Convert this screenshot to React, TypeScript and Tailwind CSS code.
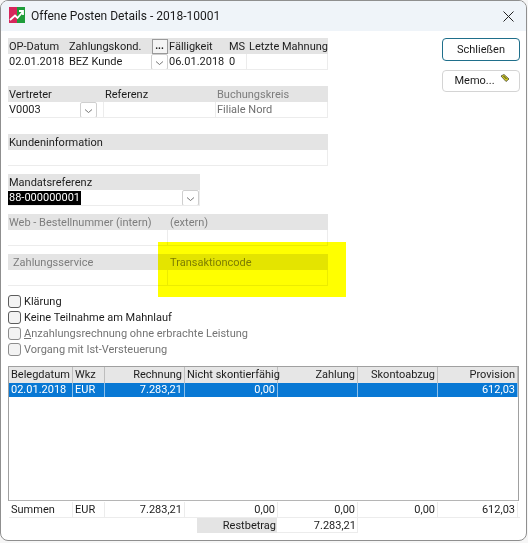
import { ReactNode } from 'react';

const font = 'font-["Roboto","Noto_Sans",sans-serif]';

function Chevron() {
  return (
    <span className="mt-[-1px] flex h-[16px] w-[17px] shrink-0 items-center justify-center rounded-[2px] border border-[#cfcfcf] bg-white">
      <svg width="9" height="6" viewBox="0 0 9 6" className="mt-[3px]">
        <path d="M1 1.5 L4.5 4.5 L8 1.5" fill="none" stroke="#555" strokeWidth="0.8" />
      </svg>
    </span>
  );
}

function Head({ children, muted, className = '' }: { children?: ReactNode; muted?: boolean; className?: string }) {
  return (
    <div className={`flex h-[16px] items-center overflow-hidden whitespace-nowrap bg-[#e4e4e4] px-[1px] pt-[1px] ${muted ? 'text-[#7d7d7d]' : 'text-[#1c1c1c]'} ${className}`}>
      {children}
    </div>
  );
}

function Val({ children, muted, className = '' }: { children?: ReactNode; muted?: boolean; className?: string }) {
  return (
    <div className={`flex h-[16px] items-center overflow-hidden whitespace-nowrap border-b border-r border-[#ececec] px-[1px] pt-[1px] ${muted ? 'text-[#6f6f6f]' : 'text-[#1c1c1c]'} ${className}`}>
      {children}
    </div>
  );
}

function Check({ label, muted, underline }: { label: string; muted?: boolean; underline?: boolean }) {
  return (
    <div className="flex h-[16px] items-center gap-[3px]">
      <span className={`h-[13px] w-[13px] rounded-[3px] border bg-[#f3f3f3] ${muted ? 'border-[#8d8d8d]' : 'border-[#5c5c5c]'}`} />
      <span className={`pt-[1px] ${muted ? 'text-[#747474]' : 'text-[#1c1c1c]'}`}>
        {underline ? (
          <>
            <span className="underline">A</span>
            {label.slice(1)}
          </>
        ) : (
          label
        )}
      </span>
    </div>
  );
}

const cols = 'grid-cols-[64px_32px_80px_93px_80px_80px_80px]';

const headers = ['Belegdatum', 'Wkz', 'Rechnung', 'Nicht skontierfähig', 'Zahlung', 'Skontoabzug', 'Provision'];
const selected = ['02.01.2018', 'EUR', '7.283,21', '0,00', '', '', '612,03'];
const totals = ['Summen', 'EUR', '7.283,21', '0,00', '0,00', '0,00', '612,03'];

export default function App() {
  return (
    <div className={`relative h-[543px] w-[528px] overflow-hidden bg-[#f6f6f6] text-[11px] leading-[14px] ${font}`}>
      <div className="h-[541px] w-[527px] overflow-hidden rounded-[8px] border border-[#8f8f8f] bg-white">
        {/* Titelleiste */}
        <div className="flex h-[30px] items-center bg-[#eff4f9] pl-[8px] pr-[12px]">
          <svg width="16" height="16" viewBox="0 0 16 16" className="mr-[6px] mt-[-2px]">
            <rect width="8" height="16" fill="#d6275c" />
            <rect x="8" width="8" height="16" fill="#1f9d3a" />
            <path d="M1 13 L6 8.5 L8.5 11 L14 4.5 M10 4 H14 V8" fill="none" stroke="#fff" strokeWidth="1.8" />
          </svg>
          <span className="text-[12px] text-[#1a1a1a]">Offene Posten Details - 2018-10001</span>
          <svg width="11" height="11" viewBox="0 0 11 11" className="ml-auto">
            <path d="M0.5 0.5 L10.5 10.5 M10.5 0.5 L0.5 10.5" stroke="#222" strokeWidth="1" />
          </svg>
        </div>

        <div className="px-[7px] pt-[7px]">
          <div className="flex">
            <div className="w-[320px]">
              <div className="grid grid-cols-[60px_83px_17px_59px_20px_81px]">
                <Head>OP-Datum</Head>
                <Head>Zahlungskond.</Head>
                <Head className="justify-center !px-0 !pt-0">
                  <span className="flex h-[15px] w-[16px] items-center justify-center border border-[#9a9a9a] bg-[#f4f4f4] text-[10px] font-bold">...</span>
                </Head>
                <Head>Fälligkeit</Head>
                <Head className="!pl-[2px]">MS</Head>
                <Head className="!pl-[2px]">Letzte Mahnung</Head>
                <Val className="border-r-0">02.01.2018</Val>
                <Val className="border-r-0">BEZ Kunde</Val>
                <Val className="border-r-0 !px-0"><Chevron /></Val>
                <Val className="border-r-0">06.01.2018</Val>
                <Val className="!pl-[2px]">0</Val>
                <Val />
              </div>

              <div className="mt-[16px] grid grid-cols-[96px_112px_112px]">
                <Head>Vertreter</Head>
                <Head>Referenz</Head>
                <Head muted>Buchungskreis</Head>
                <Val className="justify-between !pr-[6px]">V0003<Chevron /></Val>
                <Val />
                <Val muted>Filiale Nord</Val>
              </div>

              <div className="mt-[16px]">
                <Head>Kundeninformation</Head>
                <Val />
              </div>

              <div className="mt-[8px] w-[192px]">
                <Head>Mandatsreferenz</Head>
                <Val className="justify-between !pl-0 !pr-0">
                  <span className="bg-black pl-[1px] pr-[1px] text-white">88-000000001</span>
                  <Chevron />
                </Val>
              </div>

              <div className="mt-[8px] grid grid-cols-[160px_160px]">
                <Head muted>Web - Bestellnummer (intern)</Head>
                <Head muted className="!pl-[2px]">(extern)</Head>
                <Val />
                <Val />
              </div>

              <div className="mt-[8px] grid grid-cols-[160px_160px]">
                <Head muted className="!pl-[5px]">Zahlungsservice</Head>
                <Head muted className="!pl-[2px]">Transaktioncode</Head>
                <Val />
                <Val />
              </div>
            </div>

            <div className="ml-[114px] flex flex-col gap-[9px]">
              <button className="h-[23px] w-[78px] rounded-[4px] border border-[#1f6f8b] bg-white text-[#1a1a1a]">Schließen</button>
              <button className="flex h-[22px] w-[78px] items-center justify-center rounded-[4px] border border-[#d4d4d4] bg-white pl-[2px] text-[#1a1a1a]">
                Memo...
                <svg width="10" height="8" viewBox="0 0 10 8" className="ml-[5px] mt-[-6px]">
                  <path d="M1 2 L4 0.5 L9 5 L6 7.5 Z" fill="#d8d21a" stroke="#444" strokeWidth="0.8" />
                  <path d="M3.5 2 L6.5 5" stroke="#333" strokeWidth="1" />
                </svg>
              </button>
            </div>
          </div>

          <div className="mt-[7px]">
            <Check label="Klärung" />
            <Check label="Keine Teilnahme am Mahnlauf" />
            <Check label="Anzahlungsrechnung ohne erbrachte Leistung" muted underline />
            <Check label="Vorgang mit Ist-Versteuerung" muted />
          </div>

          {/* Tabelle */}
          <div className="mt-[9px] h-[135px] w-[511px] border border-[#a0a0a0] border-b-[#b5b5b5]">
            <div className={`grid ${cols} h-[16px] bg-[#e6e6e6]`}>
              {headers.map((h, i) => (
                <div key={h} className={`whitespace-nowrap border-r border-[#bdbdbd] px-[2px] pt-[1px] text-[#1c1c1c] ${i > 1 ? 'text-right' : ''}`}>
                  {h}
                </div>
              ))}
            </div>
            <div className={`grid ${cols} h-[14px] bg-[#0878d4]`}>
              {selected.map((v, i) => (
                <div key={i} className={`whitespace-nowrap border-r border-[#8fc0e8] px-[2px] text-white ${i > 1 ? 'text-right' : ''}`}>
                  {v}
                </div>
              ))}
            </div>
          </div>

          <div className={`mt-[1px] grid ${cols} ml-[1px] h-[16px] w-[511px] border-b border-[#ececec]`}>
            {totals.map((v, i) => (
              <div key={i} className={`whitespace-nowrap border-r border-[#ececec] px-[2px] pt-[1px] text-[#1c1c1c] ${i > 1 ? 'text-right' : ''}`}>
                {v}
              </div>
            ))}
          </div>

          <div className="ml-[189px] flex h-[15px]">
            <div className="w-[80px] bg-[#e4e4e4] pr-[1px] pt-[1px] text-right text-[#1c1c1c]">Restbetrag</div>
            <div className="w-[81px] border-b border-r border-[#ececec] px-[1px] pt-[1px] text-right text-[#1c1c1c]">7.283,21</div>
          </div>
        </div>
      </div>

      {/* Markierung über dem Formular */}
      <div className="absolute left-[158px] top-[242px] h-[55px] w-[188px] bg-[#ffff00] mix-blend-multiply" />
    </div>
  );
}
